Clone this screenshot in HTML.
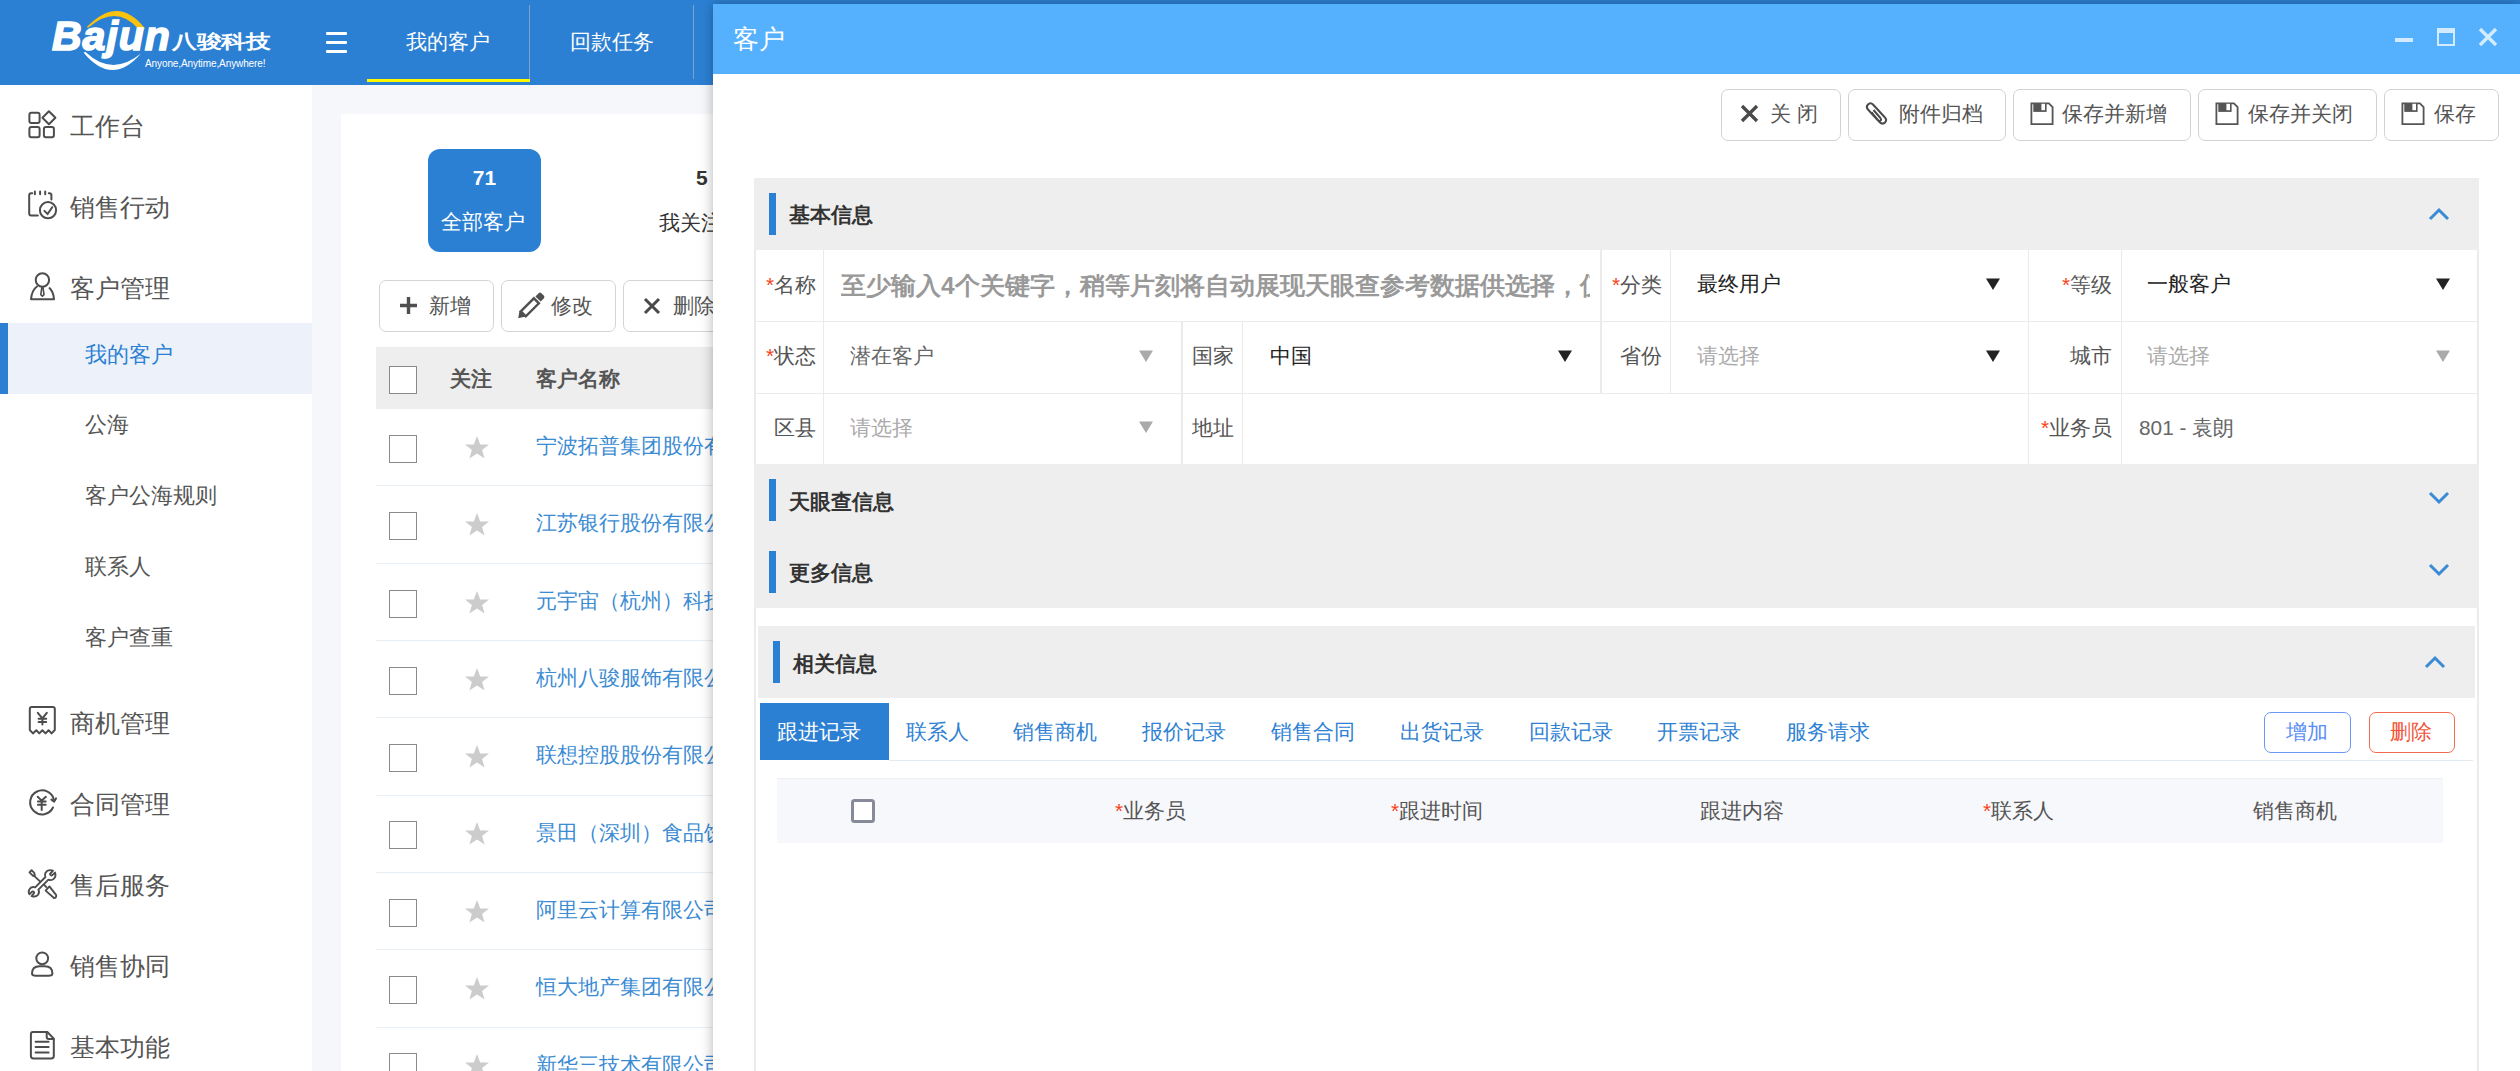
<!DOCTYPE html>
<html><head><meta charset="utf-8">
<style>
*{margin:0;padding:0;box-sizing:border-box}
html,body{width:2520px;height:1071px;overflow:hidden;background:#fff}
body{font-family:"Liberation Sans",sans-serif;position:relative;color:#555}
.a{position:absolute}
.t{position:absolute;white-space:nowrap;line-height:1}
#nav{left:0;top:0;width:2520px;height:85px;background:#2c80d3}
#side{left:0;top:85px;width:312px;height:986px;background:#fff}
#main{left:312px;top:85px;width:420px;height:986px;background:#f5f7fb}
#card{left:341px;top:114px;width:400px;height:1000px;background:#fff}
.si{color:#555;font-size:25px}
.ss{color:#555;font-size:21.8px}
.btn{position:absolute;border:1.5px solid #d4d4d4;border-radius:7px;background:#fff}
.cb{position:absolute;width:28px;height:28px;border:1.5px solid #8a8a8a;background:#fff}
.cn{color:#3b8bd3;font-size:20.8px}
.rl{position:absolute;left:376px;width:360px;height:1.2px;background:#e8eef5}
#modal{left:713px;top:4px;width:1807px;height:1067px;background:#fff;box-shadow:0 0 12px rgba(0,0,0,.3)}
#mh{left:713px;top:4px;width:1807px;height:70px;background:#55b1fe}
.tb{position:absolute;top:89px;height:52px;border:1.5px solid #d2d2d2;border-radius:7px;background:#fff}
.sec{position:absolute;background:#eeeeee}
.bar{position:absolute;width:7px;background:#2c80d3}
.sh{font-weight:bold;color:#333;font-size:21px}
.fl{color:#555;font-size:20.8px}
.ast{color:#f5441b}
.hl{position:absolute;height:1.5px;background:#ebebeb}
.vl{position:absolute;width:1.5px;background:#ebebeb}
.tab{color:#2f82d3;font-size:20.8px}
</style></head>
<body>
<!-- NAV -->
<div id="nav" class="a"></div>
<svg class="a" style="left:40px;top:5px" width="240" height="75" viewBox="0 0 240 75">
  <path d="M46.5 22.5 Q 78 -11 105 23.5 L 98 23.5 Q 76 -1 48.5 22.5 Z" fill="#f8c20f"/>
  <path d="M43.5 47.5 Q 72 82 101 48.5 Q 72 72 45.5 47 Z" fill="#fff"/>
  <text x="12" y="45" font-family="Liberation Sans" font-weight="bold" font-style="italic" font-size="41" fill="#fff" stroke="#fff" stroke-width="1.6" letter-spacing="1">Bajun</text>
  <text transform="translate(132,43) scale(1.02,0.78)" x="0" y="0" font-weight="bold" font-size="24.5" fill="#fff">八骏科技</text>
  <text x="105" y="62" font-family="Liberation Sans" font-size="10" fill="#fff" letter-spacing="-0.1">Anyone,Anytime,Anywhere!</text>
</svg>
<div class="a" style="left:326px;top:31.5px;width:21px;height:3px;background:#fff;border-radius:1px"></div>
<div class="a" style="left:326px;top:40.8px;width:21px;height:3px;background:#fff;border-radius:1px"></div>
<div class="a" style="left:326px;top:50px;width:21px;height:3px;background:#fff;border-radius:1px"></div>
<div class="t" style="left:406px;top:32px;font-size:20.8px;color:#fff">我的客户</div>
<div class="a" style="left:367px;top:79px;width:163px;height:3px;background:#fff700"></div>
<div class="a" style="left:529px;top:5px;width:1px;height:74px;background:rgba(190,190,190,.55)"></div>
<div class="t" style="left:570px;top:32px;font-size:20.8px;color:#fff">回款任务</div>
<div class="a" style="left:693px;top:5px;width:1px;height:74px;background:rgba(190,190,190,.55)"></div>

<!-- SIDEBAR -->
<div id="side" class="a"></div>
<div class="a" style="left:0;top:323px;width:312px;height:71px;background:#edf2fa"></div>
<div class="a" style="left:0;top:323px;width:8px;height:71px;background:#2c7fd1"></div>
<div class="t si" style="left:70px;top:114px">工作台</div>
<div class="t si" style="left:70px;top:195px">销售行动</div>
<div class="t si" style="left:70px;top:276px">客户管理</div>
<div class="t ss" style="left:85px;top:343.5px;color:#2c80d3">我的客户</div>
<div class="t ss" style="left:85px;top:414px">公海</div>
<div class="t ss" style="left:85px;top:485px">客户公海规则</div>
<div class="t ss" style="left:85px;top:555.5px">联系人</div>
<div class="t ss" style="left:85px;top:626.5px">客户查重</div>
<div class="t si" style="left:70px;top:710.5px">商机管理</div>
<div class="t si" style="left:70px;top:791.5px">合同管理</div>
<div class="t si" style="left:70px;top:872.5px">售后服务</div>
<div class="t si" style="left:70px;top:954px">销售协同</div>
<div class="t si" style="left:70px;top:1035px">基本功能</div>
<!-- sidebar icons -->
<svg class="a" style="left:20px;top:100px" width="50" height="50" viewBox="0 0 50 50" fill="none" stroke="#4d4d4d" stroke-width="2" stroke-linejoin="round">
  <rect x="9.4" y="12.7" width="10.2" height="10.2" rx="2"/>
  <rect x="9.4" y="127" width="0" height="0"/>
  <rect x="9.4" y="27.1" width="10.2" height="10.2" rx="2"/>
  <rect x="23.9" y="27.1" width="10" height="10.2" rx="2"/>
  <path d="M28.9 11.2 L35.4 17.7 L28.9 24.2 L22.4 17.7 Z"/>
</svg>
<svg class="a" style="left:20px;top:182px" width="50" height="50" viewBox="0 0 50 50" fill="none" stroke="#4d4d4d" stroke-width="2" stroke-linecap="round">
  <path d="M12.2 11.2 H11.2 Q9.2 11.2 9.2 13.2 V31.4 Q9.2 33.4 11.2 33.4 H17.8"/>
  <path d="M14.9 9.6 V12.3 M20.1 9.6 V12.3 M25.2 9.6 V12.3"/>
  <path d="M28.8 11.2 H29.4 Q31.4 11.2 31.4 13.2 V17.4"/>
  <circle cx="28" cy="28.2" r="8.1"/>
  <path d="M24.4 28.9 L27.6 32 L32.2 25.2"/>
</svg>
<svg class="a" style="left:20px;top:263px" width="50" height="50" viewBox="0 0 50 50" fill="none" stroke="#4d4d4d" stroke-width="2" stroke-linejoin="round">
  <circle cx="22.4" cy="17" r="6.7"/>
  <path d="M17.6 23 Q11.8 27 11 36.2 H34 Q33.4 28.5 29 24.6"/>
  <path d="M21.8 24.5 L20.8 31.6 L22.4 33.2 L24 31.6 L23 24.5 Z" stroke-width="1.6"/>
</svg>
<svg class="a" style="left:20px;top:697px" width="50" height="50" viewBox="0 0 50 50" fill="none" stroke="#4d4d4d" stroke-width="2" stroke-linejoin="round" stroke-linecap="round">
  <path d="M9.8 33 V12 Q9.8 10 11.8 10 H32.8 Q34.8 10 34.8 12 V33 L31.6 36.4 L28.6 33.3 L25.5 36.4 L22.4 33.3 L19.3 36.4 L16.3 33.3 L12.9 36.4 Z"/>
  <path d="M17.8 15.8 L22.4 21.3 L26.8 15.8 M22.4 21.3 V27.5 M18.6 21.8 H26.2 M18.6 25 H26.2"/>
</svg>
<svg class="a" style="left:20px;top:778px" width="50" height="50" viewBox="0 0 50 50" fill="none" stroke="#4d4d4d" stroke-width="2" stroke-linecap="round" stroke-linejoin="round">
  <path d="M33 29.5 A12 12 0 1 1 34 22.5"/>
  <path d="M31.4 21.6 L34.2 23.6 L36 20.4"/>
  <path d="M17.7 18.8 L21.7 22.6 L25.9 18.8 M21.7 22.6 V32 M17.9 23.4 H25.7 M17.9 26.8 H25.7"/>
</svg>
<svg class="a" style="left:20px;top:860px" width="50" height="50" viewBox="0 0 50 50" fill="none" stroke="#4d4d4d" stroke-width="1.9" stroke-linejoin="round">
  <path d="M9.5 12.3 L11.6 10.2 L14.2 12.8 L14.8 15.4 L13 15.8 L12.8 15.6 Z"/>
  <path d="M13.6 15.4 L20.2 21.6"/>
  <path d="M23.8 24.4 L26.8 27.6"/>
  <path d="M29.4 26.4 L25.6 30.6 L34 38 Q36.5 38 36.2 35.2 Z"/>
  <path d="M33 10.6 Q27.6 9 25.4 13 Q24.4 15.4 25.4 17 L15.2 27.4 Q11.2 26 9.4 29.4 Q8 32.2 9.4 34.2 L12.4 31.4 Q14 31.2 14.2 32.8 L11.6 36 Q15.6 37.4 18 34.8 Q19.8 32.2 18.4 29.6 L28.4 19.6 Q31.6 21 34 18.6 Q36.4 16.2 35 12.6 L32 15.4 Q30.2 15.6 30 14 Z"/>
</svg>
<svg class="a" style="left:20px;top:941px" width="50" height="50" viewBox="0 0 50 50" fill="none" stroke="#4d4d4d" stroke-width="2">
  <circle cx="22.2" cy="17.3" r="5.9"/>
  <path d="M19.6 25.2 H24.8 Q32.4 25.2 32.4 32.6 Q32.4 34.8 28.4 34.8 H16 Q12 34.8 12 32.6 Q12 25.2 19.6 25.2 Z"/>
</svg>
<svg class="a" style="left:20px;top:1022px" width="50" height="50" viewBox="0 0 50 50" fill="none" stroke="#4d4d4d" stroke-width="2" stroke-linejoin="round" stroke-linecap="round">
  <path d="M27.3 10 H13 Q10.9 10 10.9 12.4 V34 Q10.9 36.4 13.4 36.4 H31.2 Q33.8 36.4 33.8 34 V16.6 Z"/>
  <path d="M26.7 10.4 V15 Q26.7 17 28.7 17 H33.6"/>
  <path d="M15.6 19.7 H28.6 M15.6 25 H28.6 M15.6 30.4 H28.6"/>
</svg>

<!-- MAIN -->
<div id="main" class="a"></div>
<div id="card" class="a"></div>
<div class="a" style="left:428px;top:149px;width:113px;height:103px;background:#2c80d3;border-radius:12px"></div>
<div class="t" style="left:428px;width:113px;text-align:center;top:167px;font-size:21px;font-weight:bold;color:#fff">71</div>
<div class="t" style="left:441px;top:211.5px;font-size:20.8px;color:#fff">全部客户</div>
<div class="t" style="left:696px;top:167px;font-size:21px;font-weight:bold;color:#333">5</div>
<div class="t" style="left:659px;top:212.5px;font-size:20.8px;color:#333">我关注</div>
<div class="btn" style="left:379px;top:280px;width:115px;height:52px"></div>
<div class="btn" style="left:501px;top:280px;width:115px;height:52px"></div>
<div class="btn" style="left:623px;top:280px;width:115px;height:52px"></div>
<svg class="a" style="left:399px;top:296px" width="20" height="20" viewBox="0 0 20 20"><path d="M9.5 1 V18 M1 9.5 H18" stroke="#505050" stroke-width="3.4"/></svg>
<div class="t" style="left:429px;top:295.5px;font-size:20.8px;color:#555">新增</div>
<svg class="a" style="left:515px;top:290px" width="32" height="32" viewBox="0 0 32 32"><path d="M3.2 28.2 L4.6 20.6 L10.6 26.6 Z" fill="#505050"/><path d="M5.8 21.4 L18.9 8.3 L23.9 13.3 L10.8 26.4 Z" fill="none" stroke="#505050" stroke-width="2.4" stroke-linejoin="miter"/><path d="M20.4 6.4 L23.6 3.2 Q25 1.8 26.4 3.2 L28.8 5.6 Q30.2 7 28.8 8.4 L25.6 11.6 Z" fill="#505050"/></svg>
<div class="t" style="left:551px;top:295.5px;font-size:20.8px;color:#555">修改</div>
<svg class="a" style="left:642px;top:296px" width="20" height="20" viewBox="0 0 20 20"><path d="M3 3 L17 17 M17 3 L3 17" stroke="#4a4a4a" stroke-width="3"/></svg>
<div class="t" style="left:673px;top:295.5px;font-size:20.8px;color:#555">删除</div>
<div class="a" style="left:376px;top:347px;width:360px;height:62px;background:#eeeeee"></div>
<div class="cb" style="left:389px;top:366px"></div>
<div class="t" style="left:449.5px;top:369px;font-size:20.8px;font-weight:bold;color:#555">关注</div>
<div class="t" style="left:536px;top:369px;font-size:20.8px;font-weight:bold;color:#555">客户名称</div>
<div class="cb" style="left:389px;top:434.8px"></div>
<svg class="a" style="left:464px;top:434.8px" width="26" height="26" viewBox="0 0 26 26"><path d="M13 1 L16.2 9.4 L25 9.6 L18.1 15 L20.6 23.6 L13 18.6 L5.4 23.6 L7.9 15 L1 9.6 L9.8 9.4 Z" fill="#cccccc"/></svg>
<div class="t cn" style="left:536px;top:436.0px">宁波拓普集团股份有限公司</div>
<div class="rl" style="top:485.3px"></div>
<div class="cb" style="left:389px;top:512.1px"></div>
<svg class="a" style="left:464px;top:512.1px" width="26" height="26" viewBox="0 0 26 26"><path d="M13 1 L16.2 9.4 L25 9.6 L18.1 15 L20.6 23.6 L13 18.6 L5.4 23.6 L7.9 15 L1 9.6 L9.8 9.4 Z" fill="#cccccc"/></svg>
<div class="t cn" style="left:536px;top:513.3px">江苏银行股份有限公司</div>
<div class="rl" style="top:562.7px"></div>
<div class="cb" style="left:389px;top:589.5px"></div>
<svg class="a" style="left:464px;top:589.5px" width="26" height="26" viewBox="0 0 26 26"><path d="M13 1 L16.2 9.4 L25 9.6 L18.1 15 L20.6 23.6 L13 18.6 L5.4 23.6 L7.9 15 L1 9.6 L9.8 9.4 Z" fill="#cccccc"/></svg>
<div class="t cn" style="left:536px;top:590.7px">元宇宙（杭州）科技有限公司</div>
<div class="rl" style="top:640.0px"></div>
<div class="cb" style="left:389px;top:666.8px"></div>
<svg class="a" style="left:464px;top:666.8px" width="26" height="26" viewBox="0 0 26 26"><path d="M13 1 L16.2 9.4 L25 9.6 L18.1 15 L20.6 23.6 L13 18.6 L5.4 23.6 L7.9 15 L1 9.6 L9.8 9.4 Z" fill="#cccccc"/></svg>
<div class="t cn" style="left:536px;top:668.0px">杭州八骏服饰有限公司</div>
<div class="rl" style="top:717.3px"></div>
<div class="cb" style="left:389px;top:744.1px"></div>
<svg class="a" style="left:464px;top:744.1px" width="26" height="26" viewBox="0 0 26 26"><path d="M13 1 L16.2 9.4 L25 9.6 L18.1 15 L20.6 23.6 L13 18.6 L5.4 23.6 L7.9 15 L1 9.6 L9.8 9.4 Z" fill="#cccccc"/></svg>
<div class="t cn" style="left:536px;top:745.3px">联想控股股份有限公司</div>
<div class="rl" style="top:794.6px"></div>
<div class="cb" style="left:389px;top:821.4px"></div>
<svg class="a" style="left:464px;top:821.4px" width="26" height="26" viewBox="0 0 26 26"><path d="M13 1 L16.2 9.4 L25 9.6 L18.1 15 L20.6 23.6 L13 18.6 L5.4 23.6 L7.9 15 L1 9.6 L9.8 9.4 Z" fill="#cccccc"/></svg>
<div class="t cn" style="left:536px;top:822.6px">景田（深圳）食品饮料有限公司</div>
<div class="rl" style="top:872.0px"></div>
<div class="cb" style="left:389px;top:898.8px"></div>
<svg class="a" style="left:464px;top:898.8px" width="26" height="26" viewBox="0 0 26 26"><path d="M13 1 L16.2 9.4 L25 9.6 L18.1 15 L20.6 23.6 L13 18.6 L5.4 23.6 L7.9 15 L1 9.6 L9.8 9.4 Z" fill="#cccccc"/></svg>
<div class="t cn" style="left:536px;top:900.0px">阿里云计算有限公司</div>
<div class="rl" style="top:949.3px"></div>
<div class="cb" style="left:389px;top:976.1px"></div>
<svg class="a" style="left:464px;top:976.1px" width="26" height="26" viewBox="0 0 26 26"><path d="M13 1 L16.2 9.4 L25 9.6 L18.1 15 L20.6 23.6 L13 18.6 L5.4 23.6 L7.9 15 L1 9.6 L9.8 9.4 Z" fill="#cccccc"/></svg>
<div class="t cn" style="left:536px;top:977.3px">恒大地产集团有限公司</div>
<div class="rl" style="top:1026.6px"></div>
<div class="cb" style="left:389px;top:1053.4px"></div>
<svg class="a" style="left:464px;top:1053.4px" width="26" height="26" viewBox="0 0 26 26"><path d="M13 1 L16.2 9.4 L25 9.6 L18.1 15 L20.6 23.6 L13 18.6 L5.4 23.6 L7.9 15 L1 9.6 L9.8 9.4 Z" fill="#cccccc"/></svg>
<div class="t cn" style="left:536px;top:1054.6px">新华三技术有限公司</div>
<div class="rl" style="top:1104.0px"></div>

<!-- MODAL -->
<div id="modal" class="a"></div>
<div id="mh" class="a"></div>
<div class="t" style="left:733px;top:26.5px;font-size:25.5px;color:#fff">客户</div>
<div class="a" style="left:2395px;top:38px;width:18.3px;height:4px;background:#d2ebff"></div>
<div class="a" style="left:2437px;top:28px;width:18px;height:18px;border:2px solid #d2ebff;border-top-width:5px"></div>
<svg class="a" style="left:2477px;top:26px" width="22" height="22" viewBox="0 0 22 22"><path d="M3 3 L19 19 M19 3 L3 19" stroke="#d2ebff" stroke-width="3.4"/></svg>

<!-- toolbar -->
<div class="tb" style="left:1721px;width:120px"></div>
<svg class="a" style="left:1739px;top:103px" width="21" height="21" viewBox="0 0 21 21"><path d="M3 3 L18 18 M18 3 L3 18" stroke="#4a4a4a" stroke-width="3.3"/></svg>
<div class="t" style="left:1770px;top:104px;font-size:20.8px;color:#555;letter-spacing:6px">关闭</div>
<div class="tb" style="left:1848px;width:158px"></div>
<svg class="a" style="left:1862px;top:100px" width="28" height="28" viewBox="0 0 28 28"><path d="M9.5 12.5 L17.5 22 Q20.5 25 23 22.5 Q25.5 20 22.5 17 L11 4.5 Q8.5 2 6 4.5 Q3.5 7 6 9.5 L16 20.5 Q17.5 21.5 18.5 20.5 Q19.5 19.5 18.5 18 L11.5 10" fill="none" stroke="#4a4a4a" stroke-width="2"/></svg>
<div class="t" style="left:1899px;top:104px;font-size:20.8px;color:#555">附件归档</div>
<div class="tb" style="left:2013px;width:178px"></div>
<div class="tb" style="left:2198px;width:179px"></div>
<div class="tb" style="left:2384px;width:115px"></div>
<svg class="a" style="left:2029px;top:102px" width="25" height="25" viewBox="0 0 25 25"><path d="M2.4 1.3 H19.9 L23.6 5 V22.2 H2.4 Z" fill="none" stroke="#555" stroke-width="1.8" stroke-linejoin="miter"/><rect x="4.3" y="1" width="13.3" height="8.9" fill="#555"/><rect x="12.4" y="1.8" width="3.6" height="6.4" fill="#fff"/></svg>
<div class="t" style="left:2062px;top:104px;font-size:20.8px;color:#555">保存并新增</div>
<svg class="a" style="left:2214px;top:102px" width="25" height="25" viewBox="0 0 25 25"><path d="M2.4 1.3 H19.9 L23.6 5 V22.2 H2.4 Z" fill="none" stroke="#555" stroke-width="1.8" stroke-linejoin="miter"/><rect x="4.3" y="1" width="13.3" height="8.9" fill="#555"/><rect x="12.4" y="1.8" width="3.6" height="6.4" fill="#fff"/></svg>
<div class="t" style="left:2248px;top:104px;font-size:20.8px;color:#555">保存并关闭</div>
<svg class="a" style="left:2400px;top:102px" width="25" height="25" viewBox="0 0 25 25"><path d="M2.4 1.3 H19.9 L23.6 5 V22.2 H2.4 Z" fill="none" stroke="#555" stroke-width="1.8" stroke-linejoin="miter"/><rect x="4.3" y="1" width="13.3" height="8.9" fill="#555"/><rect x="12.4" y="1.8" width="3.6" height="6.4" fill="#fff"/></svg>
<div class="t" style="left:2434px;top:104px;font-size:20.8px;color:#555">保存</div>

<!-- content panel borders -->
<div class="vl" style="left:754px;top:178px;height:893px"></div>
<div class="vl" style="left:2477px;top:178px;height:893px"></div>

<!-- basic info section -->
<div class="sec" style="left:754px;top:178px;width:1725px;height:72px"></div>
<div class="bar" style="left:769px;top:193px;height:42px"></div>
<div class="t sh" style="left:789px;top:204px">基本信息</div>
<svg class="a" style="left:2426.5px;top:203px" width="24" height="20" viewBox="0 0 24 20"><path d="M3 16 L12 7 L21 16" fill="none" stroke="#3a8ad5" stroke-width="3"/></svg>

<!-- form grid -->
<div class="hl" style="left:754px;top:320.5px;width:1724px"></div>
<div class="hl" style="left:754px;top:392.5px;width:1724px"></div>
<div class="vl" style="left:822.5px;top:250px;height:214px"></div>
<div class="vl" style="left:1600px;top:250px;height:143px"></div>
<div class="vl" style="left:1669.5px;top:250px;height:143px"></div>
<div class="vl" style="left:2027.5px;top:250px;height:214px"></div>
<div class="vl" style="left:2120.5px;top:250px;height:214px"></div>
<div class="vl" style="left:1181px;top:321px;height:143px"></div>
<div class="vl" style="left:1241.5px;top:321px;height:143px"></div>

<div class="t fl" style="left:766px;top:275px"><span class="ast">*</span>名称</div>
<div class="t" style="left:841px;top:273.5px;font-size:24.5px;font-weight:bold;color:#999;width:749px;overflow:hidden">至少输入4个关键字，稍等片刻将自动展现天眼查参考数据供选择，仅</div>
<div class="t fl" style="left:1612px;top:275px"><span class="ast">*</span>分类</div>
<div class="t" style="left:1697px;top:274px;font-size:20.8px;color:#222">最终用户</div>
<svg class="a" style="left:1985px;top:277px" width="16" height="14" viewBox="0 0 16 14"><path d="M1 1.5 H15 L8 13 Z" fill="#222"/></svg>
<div class="t fl" style="left:2062px;top:275px"><span class="ast">*</span>等级</div>
<div class="t" style="left:2147px;top:274px;font-size:20.8px;color:#222">一般客户</div>
<svg class="a" style="left:2435px;top:277px" width="16" height="14" viewBox="0 0 16 14"><path d="M1 1.5 H15 L8 13 Z" fill="#222"/></svg>

<div class="t fl" style="left:766px;top:346px"><span class="ast">*</span>状态</div>
<div class="t" style="left:850px;top:346px;font-size:20.8px;color:#666">潜在客户</div>
<svg class="a" style="left:1138px;top:349px" width="16" height="14" viewBox="0 0 16 14"><path d="M1 1.5 H15 L8 13 Z" fill="#aaa"/></svg>
<div class="t fl" style="left:1192px;top:346px">国家</div>
<div class="t" style="left:1270px;top:346px;font-size:20.8px;color:#222">中国</div>
<svg class="a" style="left:1557px;top:349px" width="16" height="14" viewBox="0 0 16 14"><path d="M1 1.5 H15 L8 13 Z" fill="#222"/></svg>
<div class="t fl" style="left:1620px;top:346px">省份</div>
<div class="t" style="left:1697px;top:346px;font-size:20.8px;color:#aaa">请选择</div>
<svg class="a" style="left:1985px;top:349px" width="16" height="14" viewBox="0 0 16 14"><path d="M1 1.5 H15 L8 13 Z" fill="#222"/></svg>
<div class="t fl" style="left:2070px;top:346px">城市</div>
<div class="t" style="left:2147px;top:346px;font-size:20.8px;color:#aaa">请选择</div>
<svg class="a" style="left:2435px;top:349px" width="16" height="14" viewBox="0 0 16 14"><path d="M1 1.5 H15 L8 13 Z" fill="#aaa"/></svg>

<div class="t fl" style="left:774px;top:418px">区县</div>
<div class="t" style="left:850px;top:418px;font-size:20.8px;color:#aaa">请选择</div>
<svg class="a" style="left:1138px;top:420px" width="16" height="14" viewBox="0 0 16 14"><path d="M1 1.5 H15 L8 13 Z" fill="#aaa"/></svg>
<div class="t fl" style="left:1192px;top:418px">地址</div>
<div class="t fl" style="left:2041px;top:418px"><span class="ast">*</span>业务员</div>
<div class="t" style="left:2139px;top:418px;font-size:20.8px;color:#666">801 - 袁朗</div>

<!-- tianyancha & more -->
<div class="sec" style="left:754px;top:464px;width:1725px;height:144px"></div>
<div class="bar" style="left:769px;top:479px;height:42px"></div>
<div class="t sh" style="left:789px;top:491px">天眼查信息</div>
<svg class="a" style="left:2426.5px;top:489px" width="24" height="20" viewBox="0 0 24 20"><path d="M3 4 L12 13 L21 4" fill="none" stroke="#3a8ad5" stroke-width="3"/></svg>
<div class="bar" style="left:769px;top:551px;height:42px"></div>
<div class="t sh" style="left:789px;top:562px">更多信息</div>
<svg class="a" style="left:2426.5px;top:561px" width="24" height="20" viewBox="0 0 24 20"><path d="M3 4 L12 13 L21 4" fill="none" stroke="#3a8ad5" stroke-width="3"/></svg>

<!-- related info -->
<div class="sec" style="left:758px;top:626px;width:1717px;height:72px"></div>
<div class="bar" style="left:773px;top:641px;height:42px"></div>
<div class="t sh" style="left:793px;top:653px">相关信息</div>
<svg class="a" style="left:2422.5px;top:651px" width="24" height="20" viewBox="0 0 24 20"><path d="M3 16 L12 7 L21 16" fill="none" stroke="#3a8ad5" stroke-width="3"/></svg>

<div class="a" style="left:760px;top:703px;width:129px;height:57px;background:#2c80d3"></div>
<div class="a" style="left:889px;top:760px;width:1584px;height:1px;background:#e4eaf2"></div>
<div class="t tab" style="left:777px;top:722px;color:#fff">跟进记录</div>
<div class="t tab" style="left:906px;top:722px">联系人</div>
<div class="t tab" style="left:1013px;top:722px">销售商机</div>
<div class="t tab" style="left:1142px;top:722px">报价记录</div>
<div class="t tab" style="left:1271px;top:722px">销售合同</div>
<div class="t tab" style="left:1400px;top:722px">出货记录</div>
<div class="t tab" style="left:1529px;top:722px">回款记录</div>
<div class="t tab" style="left:1657px;top:722px">开票记录</div>
<div class="t tab" style="left:1786px;top:722px">服务请求</div>
<div class="a" style="left:2264px;top:712px;width:87px;height:41px;border:1.5px solid #6b98f5;border-radius:7px"></div>
<div class="t" style="left:2286px;top:722px;font-size:20.8px;color:#5b8ef5">增加</div>
<div class="a" style="left:2369px;top:712px;width:86px;height:41px;border:1.5px solid #f56b50;border-radius:7px"></div>
<div class="t" style="left:2390px;top:722px;font-size:20.8px;color:#f2543a">删除</div>

<div class="a" style="left:777px;top:778px;width:1666px;height:65px;background:#f7f8fc;border-top:1px solid #eef0f5"></div>
<div class="a" style="left:851px;top:799px;width:24px;height:24px;border:3px solid #878a99;border-radius:3.5px;background:#fff"></div>
<div class="t fl" style="left:1115px;top:801px"><span class="ast">*</span>业务员</div>
<div class="t fl" style="left:1391px;top:801px"><span class="ast">*</span>跟进时间</div>
<div class="t fl" style="left:1700px;top:801px">跟进内容</div>
<div class="t fl" style="left:1983px;top:801px"><span class="ast">*</span>联系人</div>
<div class="t fl" style="left:2253px;top:801px">销售商机</div>
</body></html>
